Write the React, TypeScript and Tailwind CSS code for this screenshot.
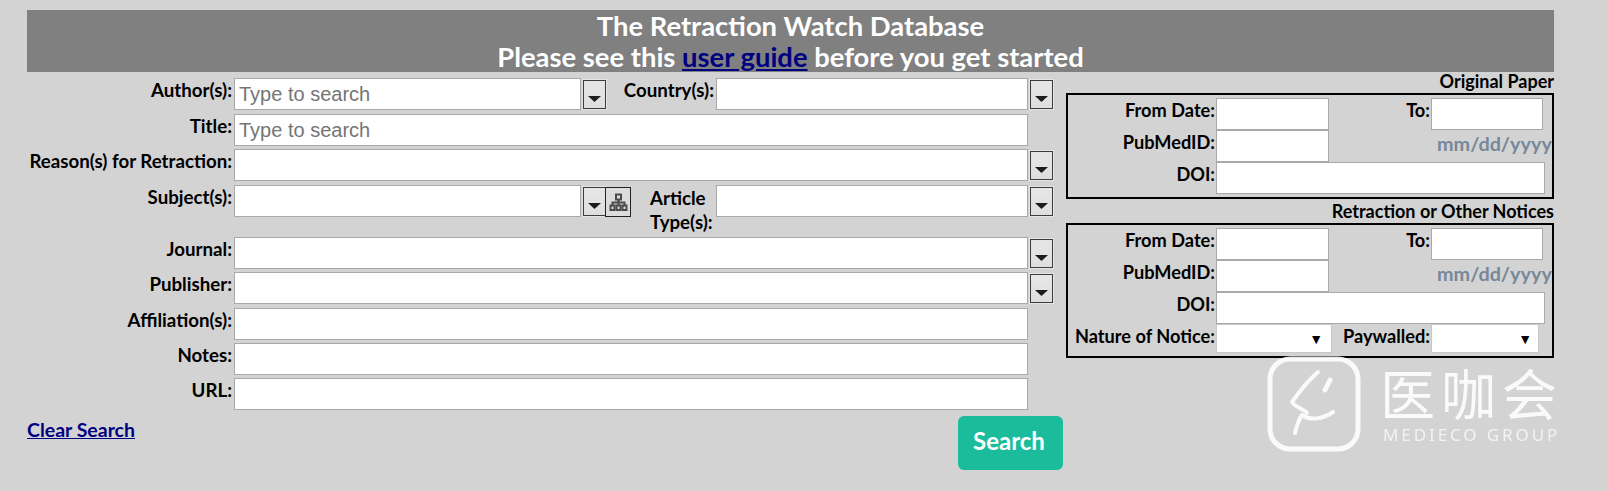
import React from 'react';

const fieldClass = "block h-8 shrink-0 border border-[#a9a9a9] bg-white px-1 text-[20px] font-['Liberation_Sans',sans-serif] font-normal text-black outline-none placeholder:text-[#757575]";

function ComboButton() {
  return (
    <button type="button" className="ml-[2px] mt-[2px] flex h-[29px] w-[23px] shrink-0 items-end justify-center border border-[#3c3c3c] bg-gradient-to-b from-[#e6e6e6] to-[#dde0dd] pb-[6px] outline outline-1 outline-[#e4e4e4]">
      <svg width="13" height="6" viewBox="0 0 13 6"><path d="M0 0h13L6.5 6z" fill="#1c1c1c" /></svg>
    </button>
  );
}

function TreeButton() {
  return (
    <button type="button" className="-ml-[1px] mt-[2px] flex h-[30px] w-[26px] shrink-0 items-center justify-center border border-[#222] bg-[#dcdcdc]">
      <svg width="19" height="19" viewBox="0 0 19 19" fill="none" stroke="#4a4a4a" strokeWidth="2">
        <rect x="7" y="1.5" width="5" height="5" />
        <path d="M9.5 6.5v6M3.5 12.5V9.5h12v3" />
        <rect x="1.5" y="12.5" width="4" height="4.5" />
        <rect x="7.5" y="12.5" width="4" height="4.5" />
        <rect x="13.5" y="12.5" width="4" height="4.5" />
      </svg>
    </button>
  );
}

function Label({ children, className = '' }: { children: React.ReactNode; className?: string }) {
  return <label className={`shrink-0 text-right text-[18.2px] leading-[25px] ${className}`}>{children}</label>;
}

// left column labels run a touch wider than the date panel ones
function SearchLabel({ children }: { children: React.ReactNode }) {
  return <label className="w-[206px] shrink-0 pr-[1px] text-right text-[18.7px] leading-[25px]">{children}</label>;
}

function SearchRow({ label, className = '', placeholder, combo }: { label: string; className?: string; placeholder?: string; combo?: boolean }) {
  return (
    <div className={`flex h-8 items-start ${className}`}>
      <SearchLabel>{label}</SearchLabel>
      <input className={`${fieldClass} ml-[1px] w-[794px]`} placeholder={placeholder} />
      {combo && <ComboButton />}
    </div>
  );
}

function DateFields() {
  return (
    <>
      <div className="flex h-8">
        <Label className="w-[147px]">From Date:</Label>
        <input className={`${fieldClass} ml-[1px] w-[113px]`} />
        <Label className="w-[101px]">To:</Label>
        <input className={`${fieldClass} ml-[1px] w-[112px]`} />
      </div>
      <div className="flex h-8">
        <Label className="w-[147px]">PubMedID:</Label>
        <input className={`${fieldClass} ml-[1px] w-[113px]`} />
        <span className="ml-[108px] whitespace-nowrap text-[19.8px] leading-[27px] text-[#778899]">mm/dd/yyyy</span>
      </div>
      <div className="flex h-8">
        <Label className="w-[147px]">DOI:</Label>
        <input className={`${fieldClass} ml-[1px] w-[329px]`} />
      </div>
    </>
  );
}

function FakeSelect({ className = '' }: { className?: string }) {
  return (
    <div className={`flex h-[29px] shrink-0 items-center justify-end border border-[#c8c8c8] bg-white text-[14px] text-black ${className}`}>▼</div>
  );
}

function Watermark() {
  return (
    <div className="pointer-events-none absolute left-[1267px] top-[356px] flex items-start text-white opacity-90 blur-[0.5px]">
      <svg width="94" height="96" viewBox="0 0 94 96" fill="none" stroke="white" strokeLinecap="round" strokeLinejoin="round">
        <rect x="3" y="3" width="88" height="90" rx="20" strokeWidth="5" />
        <path d="M51 16 C42 24 32 36 25 46 C29 52 37 53 40 57" strokeWidth="4" />
        <path d="M63 24 L58 34" strokeWidth="5" />
        <path d="M28 77 C30 69 32 63 35 59 C44 65 56 63 66 56" strokeWidth="4" />
      </svg>
      <div className="ml-[19px] mt-[6px] flex w-[178px] flex-col">
        <span className="whitespace-nowrap text-[55px] font-normal leading-[58px] tracking-[6px] font-['Noto_Sans_CJK_SC',sans-serif]">医咖会</span>
        <span className="ml-[3px] mt-[5px] whitespace-nowrap text-[17px] font-normal leading-[20px] tracking-[2.9px] text-white/80 font-['Noto_Sans',sans-serif]">MEDIECO GROUP</span>
      </div>
    </div>
  );
}

export default function App() {
  return (
    <div className="relative h-[491px] w-[1608px] overflow-hidden bg-[#d3d3d3] pl-[27px] pt-[10px] font-['Lato',sans-serif] font-bold text-black">
      <header className="w-[1527px] bg-[#808080] text-center text-[27.4px] leading-[31px] text-white">
        <div>The Retraction Watch Database</div>
        <div>Please see this <a href="#" className="text-[#000080] underline">user guide</a> before you get started</div>
      </header>

      <div className="flex">
        <div className="flex w-[1039px] flex-col pt-[6px]">
          <div className="flex h-8 items-start">
            <SearchLabel>Author(s):</SearchLabel>
            <input className={`${fieldClass} ml-[1px] w-[347px]`} placeholder="Type to search" />
            <ComboButton />
            <label className="ml-[1px] w-[107px] shrink-0 text-right text-[18.7px] leading-[25px]">Country(s):</label>
            <input className={`${fieldClass} ml-[2px] w-[312px]`} />
            <ComboButton />
          </div>
          <SearchRow label="Title:" placeholder="Type to search" className="mt-[4px]" />
          <SearchRow label="Reason(s) for Retraction:" combo className="mt-[3px]" />
          <div className="mt-[4px] flex h-12 items-start">
            <SearchLabel>Subject(s):</SearchLabel>
            <input className={`${fieldClass} ml-[1px] w-[347px]`} />
            <ComboButton />
            <TreeButton />
            <label className="ml-[19px] w-[66px] shrink-0 pt-[1px] text-left text-[18.7px] leading-[24px]">Article Type(s):</label>
            <input className={`${fieldClass} w-[312px]`} />
            <ComboButton />
          </div>
          <SearchRow label="Journal:" combo className="mt-[4px]" />
          <SearchRow label="Publisher:" combo className="mt-[3px]" />
          <SearchRow label="Affiliation(s):" className="mt-[4px]" />
          <SearchRow label="Notes:" className="mt-[3px]" />
          <SearchRow label="URL:" className="mt-[3px]" />
          <div className="mt-[6px] flex items-start justify-between pr-[3px]">
            <a href="#" className="mt-[1px] text-[19.5px] leading-[26px] text-[#000080] underline">Clear Search</a>
            <button type="button" className="h-[54px] w-[105px] rounded-[6px] bg-[#1abc9c] pb-[5px] pr-[3px] text-[24px] text-white">Search</button>
          </div>
        </div>

        <div className="flex w-[488px] flex-col">
          <div className="h-[21px] text-right text-[18px] leading-[19px]">Original Paper</div>
          <div className="border-2 border-black pb-[3px] pt-[3px]">
            <DateFields />
          </div>
          <div className="h-[24px] text-right text-[18px] leading-[24px]">Retraction or Other Notices</div>
          <div className="border-2 border-black pb-[3px] pt-[3px]">
            <DateFields />
            <div className="flex h-[29px]">
              <Label className="w-[147px]">Nature of Notice:</Label>
              <FakeSelect className="ml-[1px] w-[116px] pr-[8px]" />
              <Label className="w-[98px]">Paywalled:</Label>
              <FakeSelect className="ml-[1px] w-[108px] pr-[6px]" />
            </div>
          </div>
        </div>
      </div>

      <Watermark />
    </div>
  );
}
